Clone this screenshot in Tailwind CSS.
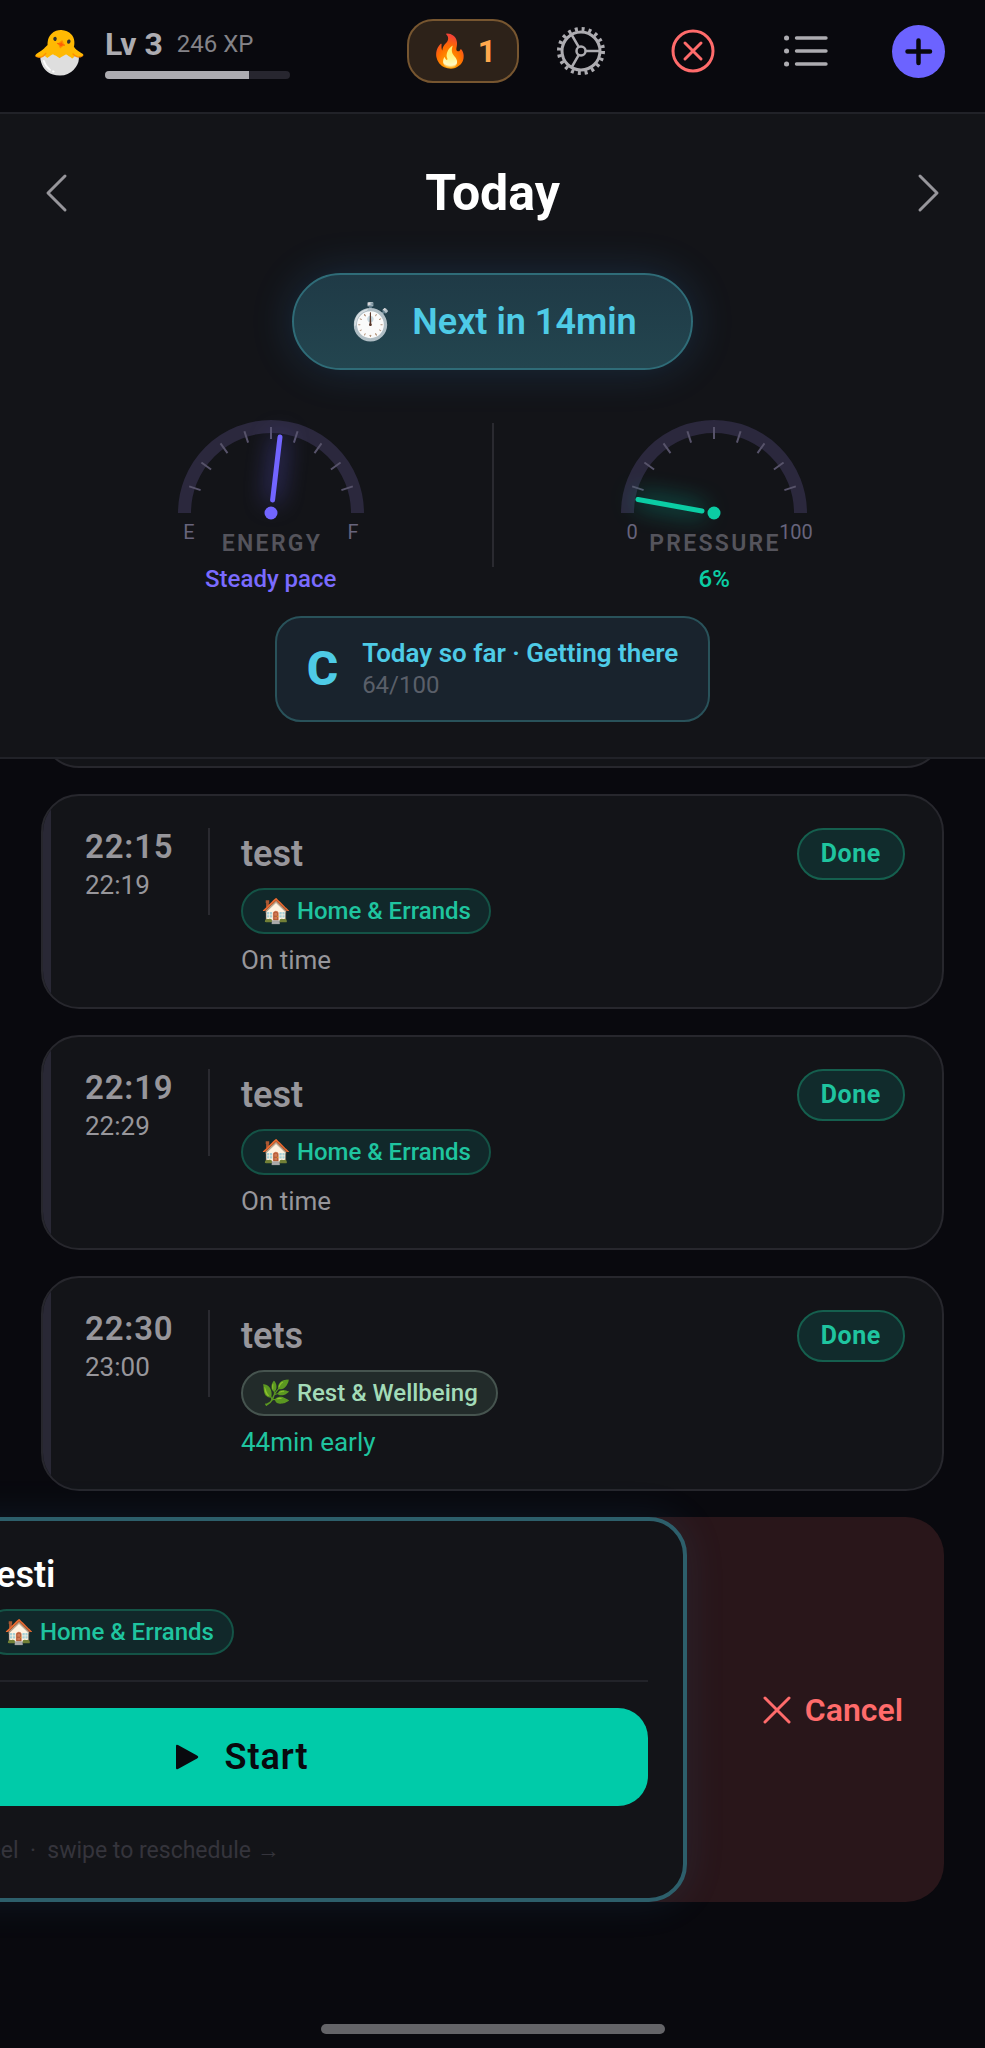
<!DOCTYPE html>
<html lang="en">
<head>
    <meta charset="UTF-8" />
    <meta name="viewport" content="width=device-width, initial-scale=1" />
    <title>Today</title>
    <script src="https://cdn.jsdelivr.net/npm/@tailwindcss/browser@4"></script>
</head>
<body class="min-h-screen flex flex-col overflow-x-hidden bg-[#09090e] text-white font-[Roboto,'Noto_Color_Emoji',sans-serif]">

    <!-- Top bar -->
    <header class="h-[114px] shrink-0 border-b-2 border-[#212228] flex items-start justify-between pl-8 pr-10">
        <div class="flex items-center gap-5 pt-6">
            <span class="text-[44px] leading-[56px] w-[53px] text-center">🐣</span>
            <div class="w-[185px]">
                <div class="flex items-center gap-3.5 leading-[38px] whitespace-nowrap">
                    <span class="text-[32px] font-bold text-[#adacb1]">Lv 3</span>
                    <span class="text-2xl text-[#848388]">246 XP</span>
                </div>
                <div class="mt-2 h-2 rounded-full bg-[#27262f] overflow-hidden">
                    <div class="h-full bg-[#adacb1]" style="width: 78%"></div>
                </div>
            </div>
        </div>
        <nav class="flex items-center pt-[19px]">
            <button class="w-[112px] h-16 rounded-[26px] border-2 border-[#775630] bg-[#2d2219] flex items-center justify-center gap-2 text-[32px] font-bold text-[#ffa94d]">
                <span>🔥</span>1
            </button>
            <button aria-label="Settings" class="ml-[37px] w-[50px] h-[50px]">
                <svg viewBox="0 0 50 50" fill="none" stroke="#adacb1" class="w-full h-full">
                    <circle cx="25" cy="25" r="19" stroke-width="3" />
                    <circle cx="25" cy="25" r="22" stroke-width="4" stroke-dasharray="3 3.911" />
                    <circle cx="25" cy="25" r="4.5" stroke-width="2.5" />
                    <path d="M29.5 25H44M22.8 21.1L15.5 8.5M22.8 28.9L15.5 41.5" stroke-width="2.5" />
                </svg>
            </button>
            <button aria-label="Cancelled" class="ml-[65px] w-11 h-11">
                <svg viewBox="0 0 44 44" fill="none" stroke="#ff6b6b" stroke-width="3" stroke-linecap="round" class="w-full h-full">
                    <circle cx="22" cy="22" r="20" />
                    <path d="M14 14L30 30M30 14L14 30" />
                </svg>
            </button>
            <button aria-label="List" class="ml-[69px] w-11 h-11">
                <svg viewBox="0 0 44 44" fill="none" stroke="#adacb1" stroke-width="3.4" stroke-linecap="round" class="w-full h-full">
                    <path d="M12.5 9H42M12.5 22H42M12.5 35H42" />
                    <path d="M2.5 9h.1M2.5 22h.1M2.5 35h.1" stroke-width="5" />
                </svg>
            </button>
            <button aria-label="Add" class="ml-16 w-[53px] h-[53px] rounded-full bg-[#6c63ff]">
                <svg viewBox="0 0 53 53" fill="none" stroke="#09090e" stroke-width="4.5" stroke-linecap="round" class="w-full h-full">
                    <path d="M26.5 15.500V38M15.500 26.500H38" />
                </svg>
            </button>
        </nav>
    </header>

    <!-- Day summary -->
    <section class="bg-[#131418] border-b-2 border-[#212228] pt-[52px] pb-[35px] flex flex-col items-center">
        <div class="w-full flex items-center justify-between px-11">
            <button aria-label="Previous day" class="w-6 h-10">
                <svg viewBox="0 0 24 40" fill="none" stroke="#97969b" stroke-width="3" stroke-linecap="round" stroke-linejoin="round" class="w-full h-full"><path d="M21 3L4 20L21 37" /></svg>
            </button>
            <h1 class="text-[50px] leading-[54px] font-bold">Today</h1>
            <button aria-label="Next day" class="w-6 h-10">
                <svg viewBox="0 0 24 40" fill="none" stroke="#97969b" stroke-width="3" stroke-linecap="round" stroke-linejoin="round" class="w-full h-full"><path d="M3 3L20 20L3 37" /></svg>
            </button>
        </div>

        <button class="mt-[53px] h-[97px] px-[54px] rounded-full border-2 border-[#2f6c78] bg-linear-to-b from-[#1f3a46] to-[#23454f] shadow-[0_0_44px_rgba(56,140,220,0.2)] flex items-center gap-6 text-4xl font-semibold text-[#4ecbe6]">
            <span class="w-10 text-center">⏱️</span>Next in 14min
        </button>

        <div class="mt-[47px] w-full px-[50px] flex">
            <div class="flex-1 flex flex-col items-center">
                <svg viewBox="0 0 200 144" class="w-[200px] h-36 overflow-visible">
                    <path d="M13.500 96A86.500 86.500 0 0 1 186.500 96" fill="none" stroke="#2b283d" stroke-width="13" />
                    <path id="ticks" d="M29.600 73.100L18.200 69.400M40.100 52.500L30.400 45.500M56.500 36.100L49.500 26.400M77.100 25.600L73.400 14.200M100 22V10M122.900 25.600L126.600 14.200M143.500 36.100L150.500 26.400M159.900 52.500L169.600 45.500M170.400 73.100L181.800 69.400" stroke="#57536a" stroke-width="2" />
                    <path d="M101.600 83L109 20" stroke="#7265ff" stroke-width="5" stroke-linecap="round" class="drop-shadow-[0_0_12px_#6c63ff]" />
                    <circle cx="100" cy="96" r="6.500" fill="#7265ff" />
                    <text x="18" y="122" text-anchor="middle" fill="#67647c" class="text-xl">E</text>
                    <text x="182" y="122" text-anchor="middle" fill="#67647c" class="text-xl">F</text>
                    <text x="101" y="134" text-anchor="middle" fill="#55545c" class="text-[23px] font-semibold tracking-widest">ENERGY</text>
                </svg>
                <p class="text-2xl leading-9 font-medium text-[#7a6bff]">Steady pace</p>
            </div>
            <div class="w-0.5 h-36 mt-1.5 bg-[#2a2a30]"></div>
            <div class="flex-1 flex flex-col items-center">
                <svg viewBox="0 0 200 144" class="w-[200px] h-36 overflow-visible">
                    <path d="M13.500 96A86.500 86.500 0 0 1 186.500 96" fill="none" stroke="#2b283d" stroke-width="13" />
                    <use href="#ticks" />
                    <path d="M88 94L24 82.500" stroke="#0bcda4" stroke-width="5" stroke-linecap="round" class="drop-shadow-[0_0_12px_#00cba9]" />
                    <circle cx="100" cy="96" r="6.500" fill="#0bcda4" />
                    <text x="18" y="122" text-anchor="middle" fill="#67647c" class="text-xl">0</text>
                    <text x="182" y="122" text-anchor="middle" fill="#67647c" class="text-xl">100</text>
                    <text x="101" y="134" text-anchor="middle" fill="#55545c" class="text-[23px] font-semibold tracking-widest">PRESSURE</text>
                </svg>
                <p class="text-2xl leading-9 font-medium text-[#0bcda4]">6%</p>
            </div>
        </div>

        <div class="mt-[19px] h-[106px] px-[30px] rounded-[26px] border-2 border-[#29525a] bg-[#19232d] flex items-center gap-6">
            <span class="text-5xl font-extrabold text-[#4ecbe6]">C</span>
            <div>
                <p class="text-[26px] leading-8 font-semibold text-[#4ecbe6]">Today so far · Getting there</p>
                <p class="text-2xl leading-8 text-[#5a5f69]">64/100</p>
            </div>
        </div>
    </section>

    <main class="px-[41px]">
        <!-- Bottom edge of the card scrolled under the summary -->
        <div class="h-[9px] overflow-hidden flex items-end">
            <div class="w-full h-24 shrink-0 rounded-[38px] border-2 border-[#27272d] bg-[#131418]"></div>
        </div>

        <div class="mt-[26px] flex flex-col gap-[26px]">
            <article class="rounded-[38px] border-2 border-[#27272d] bg-[#131418] overflow-hidden flex">
                <div class="w-2 bg-[#292835]"></div>
                <div class="flex-1 flex items-start pl-[34px] pr-[37px] pt-8 pb-[27px]">
                    <div class="w-[123px] leading-[38px] text-[#97969b]">
                        <p class="text-[33px] font-semibold tracking-wide">22:15</p>
                        <p class="text-[26px]">22:19</p>
                    </div>
                    <div class="w-0.5 h-[87px] bg-[#2a2a30]"></div>
                    <div class="flex-1 pl-[31px] flex flex-col items-start">
                        <h2 class="text-4xl leading-[52px] font-semibold text-[#97969b]">test</h2>
                        <span class="mt-2 h-[46px] px-[18px] rounded-full border-2 border-[#145346] bg-[#11282a] flex items-center gap-1.5 text-2xl font-medium text-[#1fc49f]"><span>🏠</span>Home &amp; Errands</span>
                        <p class="mt-1.5 text-[26px] leading-10 text-[#97969b]">On time</p>
                    </div>
                    <span class="h-[52px] px-[22px] rounded-full border-2 border-[#155f4e] bg-[#112b2c] flex items-center text-[25px] font-bold tracking-wide text-[#1fc49f]">Done</span>
                </div>
            </article>

            <article class="rounded-[38px] border-2 border-[#27272d] bg-[#131418] overflow-hidden flex">
                <div class="w-2 bg-[#292835]"></div>
                <div class="flex-1 flex items-start pl-[34px] pr-[37px] pt-8 pb-[27px]">
                    <div class="w-[123px] leading-[38px] text-[#97969b]">
                        <p class="text-[33px] font-semibold tracking-wide">22:19</p>
                        <p class="text-[26px]">22:29</p>
                    </div>
                    <div class="w-0.5 h-[87px] bg-[#2a2a30]"></div>
                    <div class="flex-1 pl-[31px] flex flex-col items-start">
                        <h2 class="text-4xl leading-[52px] font-semibold text-[#97969b]">test</h2>
                        <span class="mt-2 h-[46px] px-[18px] rounded-full border-2 border-[#145346] bg-[#11282a] flex items-center gap-1.5 text-2xl font-medium text-[#1fc49f]"><span>🏠</span>Home &amp; Errands</span>
                        <p class="mt-1.5 text-[26px] leading-10 text-[#97969b]">On time</p>
                    </div>
                    <span class="h-[52px] px-[22px] rounded-full border-2 border-[#155f4e] bg-[#112b2c] flex items-center text-[25px] font-bold tracking-wide text-[#1fc49f]">Done</span>
                </div>
            </article>

            <article class="rounded-[38px] border-2 border-[#27272d] bg-[#131418] overflow-hidden flex">
                <div class="w-2 bg-[#292835]"></div>
                <div class="flex-1 flex items-start pl-[34px] pr-[37px] pt-8 pb-[27px]">
                    <div class="w-[123px] leading-[38px] text-[#97969b]">
                        <p class="text-[33px] font-semibold tracking-wide">22:30</p>
                        <p class="text-[26px]">23:00</p>
                    </div>
                    <div class="w-0.5 h-[87px] bg-[#2a2a30]"></div>
                    <div class="flex-1 pl-[31px] flex flex-col items-start">
                        <h2 class="text-4xl leading-[52px] font-semibold text-[#97969b]">tets</h2>
                        <span class="mt-2 h-[46px] px-[18px] rounded-full border-2 border-[#46544f] bg-[#222b2a] flex items-center gap-1.5 text-2xl font-medium text-[#a3dbb8]"><span>🌿</span>Rest &amp; Wellbeing</span>
                        <p class="mt-1.5 text-[26px] leading-10 text-[#1fc49f]">44min early</p>
                    </div>
                    <span class="h-[52px] px-[22px] rounded-full border-2 border-[#155f4e] bg-[#112b2c] flex items-center text-[25px] font-bold tracking-wide text-[#1fc49f]">Done</span>
                </div>
            </article>

            <!-- Upcoming item, swiped left to show Cancel -->
            <article class="relative rounded-[38px] bg-[#29161a]">
                <button class="absolute inset-y-0 right-[41px] flex items-center gap-3.5 text-[32px] font-semibold text-[#ff6b6b]">
                    <svg viewBox="0 0 28 28" fill="none" stroke="currentColor" stroke-width="3" stroke-linecap="round" class="w-7 h-7"><path d="M2 2L26 26M26 2L2 26" /></svg>
                    Cancel
                </button>
                <div class="-translate-x-[257px] rounded-[38px] border-4 border-[#2d5f6b] bg-[#131418] shadow-[0_0_40px_rgba(56,140,200,0.12)] px-[35px] py-7">
                    <div class="flex items-start pl-[5px]">
                        <div class="w-[123px] leading-[38px]">
                            <p class="text-[33px] font-semibold tracking-wide">23:15</p>
                            <p class="text-[26px] text-[#97969b]">23:30</p>
                        </div>
                        <div class="w-0.5 h-[87px] bg-[#2a2a30]"></div>
                        <div class="pl-[31px] flex flex-col items-start">
                            <h2 class="text-4xl leading-[52px] font-semibold">testi</h2>
                            <span class="mt-2 h-[46px] px-[18px] rounded-full border-2 border-[#145346] bg-[#11282a] flex items-center gap-1.5 text-2xl font-medium text-[#1fc49f]"><span>🏠</span>Home &amp; Errands</span>
                        </div>
                    </div>
                    <hr class="mt-[25px] border-t-2 border-[#222329]" />
                    <button class="mt-[26px] pl-3 w-full h-[98px] rounded-[30px] bg-[#00cba9] text-[#09090e] text-4xl font-semibold tracking-wide flex items-center justify-center gap-[26px]">
                        <svg viewBox="0 0 24 26" fill="currentColor" class="w-6 h-[26px]"><path d="M1 2Q1 0 3 1L22 11.500Q24.500 13 22 14.500L3 25Q1 26 1 24Z" /></svg>
                        Start
                    </button>
                    <p class="mt-[26px] pl-2 text-[23px] leading-[38px] text-[#35343c] whitespace-pre">← swipe to cancel  ·  swipe to reschedule →</p>
                </div>
            </article>
        </div>
    </main>

    <!-- Home indicator -->
    <div class="mt-auto mb-3.5 mx-auto w-[344px] h-2.5 rounded-full bg-[#646468]"></div>
</body>
</html>
